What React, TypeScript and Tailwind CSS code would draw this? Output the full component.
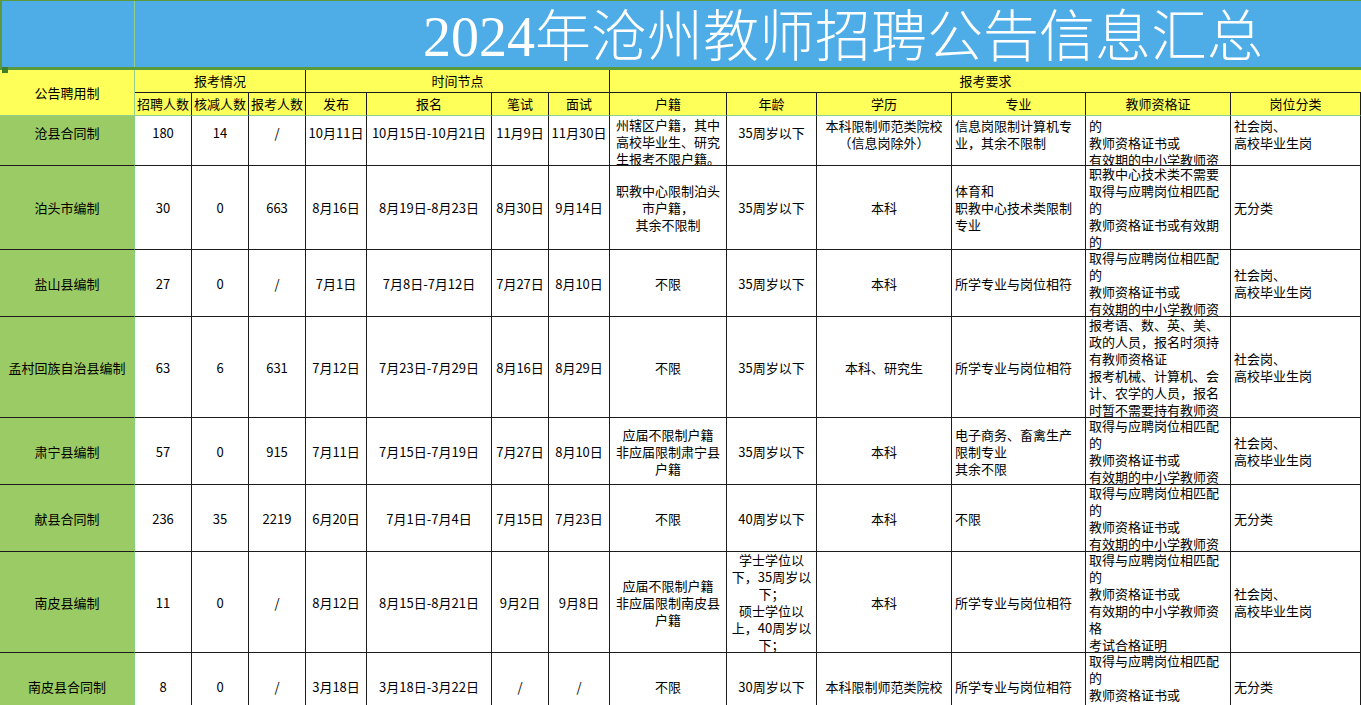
const FONT = { fontFamily: '"Noto Sans CJK SC", sans-serif' };

// 每行: 高度在 grid-rows 中定义, 单元格用 \n 换行
const ROWS: string[][] = [
  ['沧县合同制', '180', '14', '/', '10月11日', '10月15日-10月21日', '11月9日', '11月30日', '州辖区户籍，其中\n高校毕业生、研究\n生报考不限户籍。', '35周岁以下', '本科限制师范类院校\n（信息岗除外）', '信息岗限制计算机专\n业，其余不限制', '的\n教师资格证书或\n有效期的中小学教师资', '社会岗、\n高校毕业生岗'],
  ['泊头市编制', '30', '0', '663', '8月16日', '8月19日-8月23日', '8月30日', '9月14日', '职教中心限制泊头\n市户籍，\n其余不限制', '35周岁以下', '本科', '体育和\n职教中心技术类限制\n专业', '职教中心技术类不需要\n取得与应聘岗位相匹配\n的\n教师资格证书或有效期\n的', '无分类'],
  ['盐山县编制', '27', '0', '/', '7月1日', '7月8日-7月12日', '7月27日', '8月10日', '不限', '35周岁以下', '本科', '所学专业与岗位相符', '取得与应聘岗位相匹配\n的\n教师资格证书或\n有效期的中小学教师资', '社会岗、\n高校毕业生岗'],
  ['孟村回族自治县编制', '63', '6', '631', '7月12日', '7月23日-7月29日', '8月16日', '8月29日', '不限', '35周岁以下', '本科、研究生', '所学专业与岗位相符', '报考语、数、英、美、\n政的人员，报名时须持\n有教师资格证\n报考机械、计算机、会\n计、农学的人员，报名\n时暂不需要持有教师资', '社会岗、\n高校毕业生岗'],
  ['肃宁县编制', '57', '0', '915', '7月11日', '7月15日-7月19日', '7月27日', '8月10日', '应届不限制户籍\n非应届限制肃宁县\n户籍', '35周岁以下', '本科', '电子商务、畜禽生产\n限制专业\n其余不限', '取得与应聘岗位相匹配\n的\n教师资格证书或\n有效期的中小学教师资', '社会岗、\n高校毕业生岗'],
  ['献县合同制', '236', '35', '2219', '6月20日', '7月1日-7月4日', '7月15日', '7月23日', '不限', '40周岁以下', '本科', '不限', '取得与应聘岗位相匹配\n的\n教师资格证书或\n有效期的中小学教师资', '无分类'],
  ['南皮县编制', '11', '0', '/', '8月12日', '8月15日-8月21日', '9月2日', '9月8日', '应届不限制户籍\n非应届限制南皮县\n户籍', '学士学位以\n下，35周岁以\n下；\n硕士学位以\n上，40周岁以\n下；', '本科', '所学专业与岗位相符', '取得与应聘岗位相匹配\n的\n教师资格证书或\n有效期的中小学教师资\n格\n考试合格证明', '社会岗、\n高校毕业生岗'],
  ['南皮县合同制', '8', '0', '/', '3月18日', '3月18日-3月22日', '/', '/', '不限', '30周岁以下', '本科限制师范类院校', '所学专业与岗位相符', '取得与应聘岗位相匹配\n的\n教师资格证书或\n有效期的中小学教师资', '无分类'],
];

const SUB_HEADERS = ['招聘人数', '核减人数', '报考人数', '发布', '报名', '笔试', '面试', '户籍', '年龄', '学历', '专业', '教师资格证', '岗位分类'];

function DataCell({ text, col, first }: { text: string; col: number; first: boolean }) {
  const left = col >= 11;
  const multi = text.includes('\n');
  let v = 'items-center';
  if (first) v = multi ? (col === 8 ? 'items-start pt-0' : 'items-start pt-px') : 'items-start pt-2';
  return (
    <div
      className={`flex overflow-hidden border-r border-b border-[#1c1c1c] ${v} ${
        col === 0 ? 'bg-[#9bcb64] border-r-[#86cf7e] justify-center' : 'bg-white'
      } ${left ? 'justify-start pl-[3px]' : 'justify-center'}`}
    >
      <span className={`whitespace-pre leading-[17px] ${left ? 'text-left' : 'text-center'}`}>{text}</span>
    </div>
  );
}

export default function App() {
  return (
    <div className="relative h-screen w-[1361px] overflow-hidden bg-white text-[13px] text-black" style={FONT}>
      {/* 标题栏 */}
      <div className="flex h-[70px] border-t border-b-[3px] border-l-2 border-[#5a9a3c] bg-[#4eace7]">
        <div className="w-[133px] border-r border-[#8fd08f]" />
        <div className="flex flex-1 items-center pl-[288px] pt-[6px]">
          <span
            className="whitespace-nowrap text-[56px] font-light leading-none text-white"
            style={{ fontFamily: '"Liberation Serif", "Noto Sans CJK SC", serif' }}
          >
            2024年沧州教师招聘公告信息汇总
          </span>
        </div>
      </div>
      <div className="absolute left-[2px] top-[67px] h-[6px] w-[6px] bg-[#3f7f2a]" />

      {/* 表格 */}
      <div className="grid grid-cols-[135px_57px_57px_57px_61px_125px_57px_61px_117px_90px_135px_134px_145px_130px] grid-rows-[23px_23px_50px_84px_67px_101px_67px_67px_101px_67px]">
        <div className="row-span-2 flex items-center justify-center border-r border-b border-[#8fd08f] bg-[#ffff5a]">公告聘用制</div>
        <div className="col-span-3 flex items-center justify-center border-r border-b border-[#1c1c1c] bg-[#ffff5a]">报考情况</div>
        <div className="col-span-4 flex items-center justify-center border-r border-b border-[#1c1c1c] bg-[#ffff5a]">时间节点</div>
        <div className="col-span-6 flex items-center justify-center border-b border-[#1c1c1c] bg-[#ffff5a]">报考要求</div>
        {SUB_HEADERS.map(h => (
          <div
            key={h}
            className="flex items-center justify-center whitespace-nowrap border-r border-b border-r-[#1c1c1c] border-b-[#8fd08f] bg-[#ffff5a]"
          >
            {h}
          </div>
        ))}
        {ROWS.map((row, r) =>
          row.map((c, i) => <DataCell key={`${r}-${i}`} text={c} col={i} first={r === 0} />)
        )}
      </div>
    </div>
  );
}
